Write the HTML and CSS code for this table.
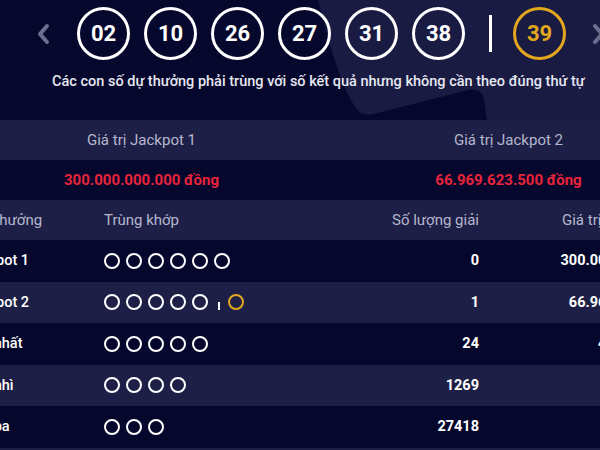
FILE: index.html
```html
<!DOCTYPE html>
<html lang="vi">
<head>
<meta charset="utf-8">
<link rel="stylesheet" href="styles.css">
</head>
<body>
<div class="page">
  <section class="top">
    <svg class="top-bg" width="600" height="120" viewBox="0 0 600 120" aria-hidden="true">
      <path d="M318 0 C 330 45 340 85 356 108 Q 362 117 374 114 L 468 90 Q 482 87 484 100 L 487 120 L 600 120 L 600 0 Z" fill="#1a1b43"/>
    </svg>
    <div class="balls">
      <svg class="arrow" width="14" height="22" viewBox="0 0 14 22"><path d="M11 3 L4 11 L11 19" fill="none" stroke="#6c6e8e" stroke-width="4" stroke-linecap="round" stroke-linejoin="round"/></svg>
      <span class="ball">02</span>
      <span class="ball">10</span>
      <span class="ball">26</span>
      <span class="ball">27</span>
      <span class="ball">31</span>
      <span class="ball">38</span>
      <span class="sep"></span>
      <span class="ball gold">39</span>
      <svg class="arrow arrow-right" width="14" height="22" viewBox="0 0 14 22"><path d="M3 3 L10 11 L3 19" fill="none" stroke="#6c6e8e" stroke-width="4" stroke-linecap="round" stroke-linejoin="round"/></svg>
    </div>
    <p class="note">Các con số dự thưởng phải trùng với số kết quả nhưng không cần theo đúng thứ tự</p>
  </section>

  <section class="jackpots">
    <div class="jp-head">Giá trị Jackpot 1</div>
    <div class="jp-head">Giá trị Jackpot 2</div>
    <div class="jp-val">300.000.000.000 đồng</div>
    <div class="jp-val">66.969.623.500 đồng</div>
  </section>

  <section class="prizes">
    <div class="row head">
      <div class="c-name">Giải thưởng</div>
      <div class="c-match">Trùng khớp</div>
      <div class="c-count">Số lượng giải</div>
      <div class="c-value head-value">Giá trị giải (đồng)</div>
      <div></div>
    </div>
    <div class="row dark">
      <div class="c-name">Jackpot 1</div>
      <div class="c-match"><i class="ring"></i><i class="ring"></i><i class="ring"></i><i class="ring"></i><i class="ring"></i><i class="ring"></i></div>
      <div class="c-count">0</div>
      <div class="c-value">300.000.000.000</div>
      <div></div>
    </div>
    <div class="row light">
      <div class="c-name">Jackpot 2</div>
      <div class="c-match"><i class="ring"></i><i class="ring"></i><i class="ring"></i><i class="ring"></i><i class="ring"></i><i class="bar"></i><i class="ring gold-ring"></i></div>
      <div class="c-count">1</div>
      <div class="c-value">66.969.623.500</div>
      <div></div>
    </div>
    <div class="row dark">
      <div class="c-name">Giải nhất</div>
      <div class="c-match"><i class="ring"></i><i class="ring"></i><i class="ring"></i><i class="ring"></i><i class="ring"></i></div>
      <div class="c-count">24</div>
      <div class="c-value">40.000.000</div>
      <div></div>
    </div>
    <div class="row light">
      <div class="c-name">Giải nhì</div>
      <div class="c-match"><i class="ring"></i><i class="ring"></i><i class="ring"></i><i class="ring"></i></div>
      <div class="c-count">1269</div>
      <div class="c-value">500.000</div>
      <div></div>
    </div>
    <div class="row dark">
      <div class="c-name">Giải ba</div>
      <div class="c-match"><i class="ring"></i><i class="ring"></i><i class="ring"></i></div>
      <div class="c-count">27418</div>
      <div class="c-value">50.000</div>
      <div></div>
    </div>
    <div class="row light"></div>
  </section>
</div>
</body>
</html>
```

FILE: styles.css
```css
* { box-sizing: border-box; }
html, body {
  margin: 0;
  padding: 0;
  background: #06072d;
}
body {
  width: 600px;
  height: 450px;
  overflow: hidden;
  font-family: Roboto, "Noto Sans", sans-serif;
  color: #ffffff;
}
.page {
  width: 600px;
}
.top {
  position: relative;
  height: 120px;
  background: #06072d;
}
.top-bg {
  position: absolute;
  left: 0;
  top: 0;
}
.balls {
  position: relative;
  display: flex;
  align-items: center;
  height: 53px;
  padding-top: 7px;
  box-sizing: content-box;
  padding-left: 36px;
}
.arrow {
  flex: none;
  margin-right: 27px;
}
.arrow-right {
  margin-right: 0;
  margin-left: 26px;
}
.ball {
  flex: none;
  width: 53px;
  height: 53px;
  border: 3.5px solid #ffffff;
  border-radius: 50%;
  display: flex;
  align-items: center;
  justify-content: center;
  font-weight: 700;
  font-size: 22px;
  color: #ffffff;
  margin-right: 14px;
}
.ball.gold {
  border-color: #e2a71d;
  color: #e2a71d;
  margin-right: 0;
}
.sep {
  flex: none;
  width: 3px;
  height: 37px;
  background: #ffffff;
  margin-left: 10px;
  margin-right: 21px;
}
.note {
  position: relative;
  margin: 13px 0 0;
  padding-left: 52px;
  white-space: nowrap;
  font-size: 14.5px;
  font-weight: 500;
  color: #e6e7f0;
}
.jackpots {
  margin-left: -42px;
  width: 734px;
  display: grid;
  grid-template-columns: 367px 367px;
}
.jp-head {
  height: 40px;
  background: #1e1f46;
  display: flex;
  align-items: center;
  justify-content: center;
  font-size: 15px;
  color: #b5b7cd;
}
.jp-val {
  height: 40px;
  background: #06072d;
  display: flex;
  align-items: center;
  justify-content: center;
  font-size: 15px;
  font-weight: 700;
  color: #e8243b;
}
.prizes {
  margin-left: -42px;
  width: 734px;
}
.row {
  display: grid;
  grid-template-columns: 146px 246px 129px 194px 19px;
  align-items: center;
  height: 41.5px;
  font-size: 14.5px;
}
.row.head {
  height: 40px;
  background: #1e1f46;
  color: #b5b7cd;
  font-size: 15px;
}
.row.dark { background: #06072d; }
.row.light { background: #1e1f46; }
.c-name {
  padding-left: 7px;
  white-space: nowrap;
  font-weight: 500;
}
.row.head .c-name { font-weight: 400; }
.c-match {
  display: flex;
  align-items: center;
}
.c-count {
  text-align: right;
  font-weight: 700;
}
.row.head .c-count { font-weight: 400; }
.c-value {
  text-align: right;
  font-weight: 700;
  white-space: nowrap;
}
.head-value {
  text-align: left;
  padding-left: 83px;
  font-weight: 400;
  overflow: hidden;
}
.ring {
  display: block;
  flex: none;
  width: 16px;
  height: 16px;
  border: 2.5px solid #ffffff;
  border-radius: 50%;
  margin-right: 6px;
}
.bar {
  display: block;
  flex: none;
  width: 2px;
  height: 8px;
  background: #ffffff;
  margin: 8px 8px 0 4px;
}
.ring.gold-ring {
  border-color: #e2a71d;
}
```
